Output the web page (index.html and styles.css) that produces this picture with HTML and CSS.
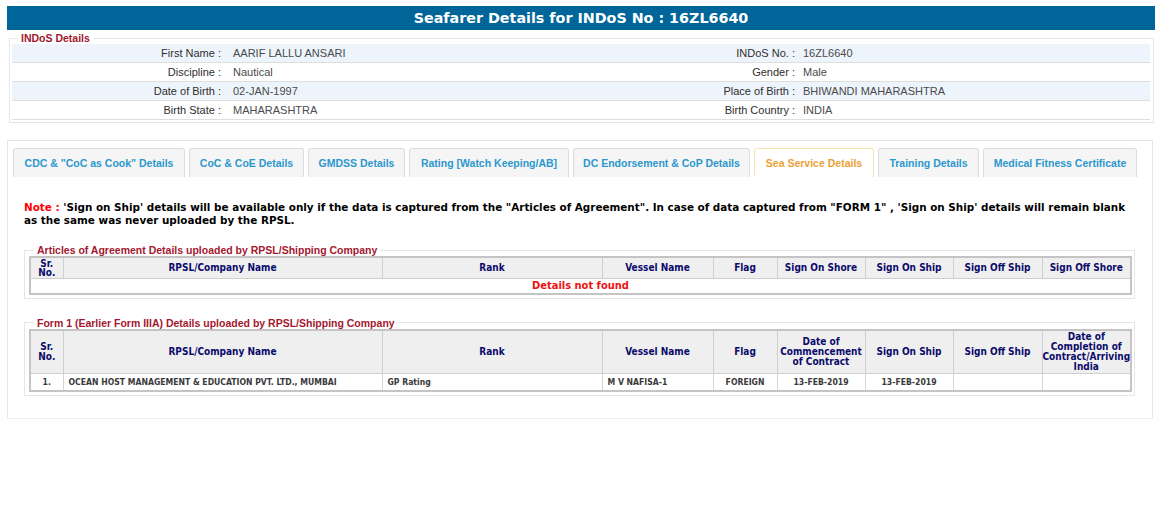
FILE: index.html
```html
<!DOCTYPE html>
<html>
<head>
<meta charset="utf-8">
<title>Seafarer Details</title>
<link rel="stylesheet" href="styles.css">
</head>
<body>
<div class="page">
  <h1 class="title">Seafarer Details for INDoS No : 16ZL6640</h1>

  <fieldset class="box indos">
    <legend>INDoS Details</legend>
    <table class="info">
      <colgroup>
        <col class="ci1"><col class="ci2"><col class="ci3"><col class="ci4">
      </colgroup>
      <tr class="alt">
        <td class="lbl">First Name :</td><td class="val">AARIF LALLU ANSARI</td>
        <td class="lbl r">INDoS No. :</td><td class="val r">16ZL6640</td>
      </tr>
      <tr>
        <td class="lbl">Discipline :</td><td class="val">Nautical</td>
        <td class="lbl r">Gender :</td><td class="val r">Male</td>
      </tr>
      <tr class="alt">
        <td class="lbl">Date of Birth :</td><td class="val">02-JAN-1997</td>
        <td class="lbl r">Place of Birth :</td><td class="val r">BHIWANDI MAHARASHTRA</td>
      </tr>
      <tr>
        <td class="lbl">Birth State :</td><td class="val">MAHARASHTRA</td>
        <td class="lbl r">Birth Country :</td><td class="val r">INDIA</td>
      </tr>
    </table>
  </fieldset>

  <div class="panel">
    <ul class="tabs">
      <li class="tab t1">CDC &amp; "CoC as Cook" Details</li>
      <li class="tab t2">CoC &amp; CoE Details</li>
      <li class="tab t3">GMDSS Details</li>
      <li class="tab t4">Rating [Watch Keeping/AB]</li>
      <li class="tab t5">DC Endorsement &amp; CoP Details</li>
      <li class="tab t6 active">Sea Service Details</li>
      <li class="tab t7">Training Details</li>
      <li class="tab t8">Medical Fitness Certificate</li>
    </ul>

    <div class="tab-body">
      <p class="note"><span class="note-lbl">Note :</span> 'Sign on Ship' details will be available only if the data is captured from the "Articles of Agreement". In case of data captured from "FORM 1" , 'Sign on Ship' details will remain blank as the same was never uploaded by the RPSL.</p>

      <fieldset class="box group g1">
        <legend>Articles of Agreement Details uploaded by RPSL/Shipping Company</legend>
        <table class="grid">
          <colgroup>
            <col class="c-sr"><col class="c-co"><col class="c-rank"><col class="c-ves"><col class="c-flag"><col class="c-d1"><col class="c-d2"><col class="c-d3"><col class="c-d4">
          </colgroup>
          <tr class="head h1">
            <th>Sr.<br>No.</th><th>RPSL/Company Name</th><th>Rank</th><th>Vessel Name</th><th>Flag</th><th>Sign On Shore</th><th>Sign On Ship</th><th>Sign Off Ship</th><th>Sign Off Shore</th>
          </tr>
          <tr class="empty">
            <td colspan="9">Details not found</td>
          </tr>
        </table>
      </fieldset>

      <fieldset class="box group g2">
        <legend>Form 1 (Earlier Form IIIA) Details uploaded by RPSL/Shipping Company</legend>
        <table class="grid">
          <colgroup>
            <col class="c-sr"><col class="c-co"><col class="c-rank"><col class="c-ves"><col class="c-flag"><col class="c-d1"><col class="c-d2"><col class="c-d3"><col class="c-d4">
          </colgroup>
          <tr class="head h2">
            <th>Sr.<br>No.</th><th>RPSL/Company Name</th><th>Rank</th><th>Vessel Name</th><th>Flag</th><th>Date of<br>Commencement<br>of Contract</th><th>Sign On Ship</th><th>Sign Off Ship</th><th>Date of<br>Completion of<br>Contract/Arriving<br>India</th>
          </tr>
          <tr class="data">
            <td class="ctr">1.</td>
            <td>OCEAN HOST MANAGEMENT &amp; EDUCATION PVT. LTD., MUMBAI</td>
            <td>GP Rating</td>
            <td>M V NAFISA-1</td>
            <td class="ctr">FOREIGN</td>
            <td class="ctr">13-FEB-2019</td>
            <td class="ctr">13-FEB-2019</td>
            <td></td>
            <td></td>
          </tr>
        </table>
      </fieldset>
    </div>
  </div>
</div>
</body>
</html>
```

FILE: styles.css
```css
html, body {
  margin: 0;
  padding: 0;
  background: #ffffff;
}

body {
  font-family: "Liberation Sans", Arial, sans-serif;
  font-size: 11px;
  color: #333;
}

.page {
  padding: 6px 5px 0 7px;
}

.title {
  margin: 0;
  height: 24px;
  line-height: 25px;
  background: #006699;
  color: #fff;
  text-align: center;
  font-family: "DejaVu Sans", Verdana, sans-serif;
  font-size: 14.3px;
  font-weight: bold;
}

/* fieldsets */
.box {
  border: 1px solid #e6e6e6;
  margin: 0;
  min-width: 0;
}

.box legend {
  font-family: "Liberation Sans", Arial, sans-serif;
  font-weight: bold;
  font-size: 10.5px;
  color: #a3182f;
  padding: 0 3px;
  line-height: 12px;
}

.indos {
  margin: 2px 1px 0 2px;
  padding: 0 3px 2px 2px;
}

.indos legend {
  margin-left: 6px;
}

.info {
  width: 100%;
  border-collapse: collapse;
  table-layout: fixed;
}

.ci1 { width: 215px; }
.ci2 { width: 357px; }
.ci3 { width: 215px; }

.info td {
  height: 18px;
  border-bottom: 1px solid #dedede;
  padding: 0;
  font-size: 11px;
  line-height: 18px;
  white-space: nowrap;
}

.info tr.alt td {
  background: #eef4fb;
}

.info .lbl {
  text-align: right;
  padding-right: 6px;
  color: #2e2e2e;
}

.info .val {
  padding-left: 6px;
  color: #4a4a4a;
}

.info .lbl.r {
  padding-right: 4px;
}

.info .val.r {
  padding-left: 4px;
}

/* panel with tabs */
.panel {
  margin: 17px 2px 0 0;
  border: 1px solid #e6e6e6;
  border-bottom-color: #f0f0f0;
  padding: 7px 0 22px 5px;
}

.tabs {
  list-style: none;
  margin: 0;
  padding: 0;
  display: flex;
  gap: 4px;
}

.tab {
  box-sizing: border-box;
  flex: 0 0 auto;
  height: 29px;
  line-height: 28px;
  padding: 0;
  background: #f5f5f5;
  border: 1px solid #dddddd;
  border-bottom: none;
  border-radius: 3px 3px 0 0;
  color: #2b98cd;
  font-family: "Liberation Sans", Arial, sans-serif;
  font-weight: bold;
  font-size: 10.5px;
  white-space: nowrap;
  text-align: center;
}

.tab.active {
  background: #fff;
  border-color: #f8e6b3;
  color: #eba135;
}

.t1 { width: 172px; }
.t2 { width: 115px; }
.t3 { width: 97px; }
.t4 { width: 160px; }
.t5 { width: 177px; }
.t6 { width: 120px; }
.t7 { width: 101px; }
.t8 { width: 154px; }

.tab-body {
  padding: 24px 0 0 0;
}

.note {
  margin: 0 14px 17px 11px;
  font-family: "DejaVu Sans", Verdana, sans-serif;
  font-weight: bold;
  font-size: 10.4px;
  line-height: 13px;
  color: #000;
}

.note-lbl {
  color: #ff0000;
}

.group {
  margin: 0 17px 0 11px;
  padding: 0 3px 3px 4px;
}

.group legend {
  margin-left: 5px;
}

.g2 {
  margin-top: 18px;
}

/* grids */
.grid {
  width: 100%;
  table-layout: fixed;
  border-collapse: collapse;
  border: 2px solid #c4c4c4;
  font-family: "DejaVu Sans Condensed", "DejaVu Sans", sans-serif;
  font-stretch: condensed;
}

.c-sr { width: 33px; }
.c-co { width: 319px; }
.c-rank { width: 220px; }
.c-ves { width: 111px; }
.c-flag { width: 64px; }
.c-d1 { width: 88px; }
.c-d2 { width: 88px; }
.c-d3 { width: 89px; }
.c-d4 { width: 89px; }

.grid th {
  background: #efefef;
  color: #0b0b6b;
  font-weight: bold;
  font-size: 10px;
  line-height: 9px;
  border: 1px solid #cfcfcf;
  padding: 0;
  text-align: center;
}

.h1 { height: 21px; }
.h2 { height: 44px; }

.h2 th {
  line-height: 10px;
}

.empty td {
  height: 14px;
  text-align: center;
  color: #ee1111;
  font-weight: bold;
  font-size: 11px;
  line-height: 13px;
  padding: 0;
}

.data td {
  height: 16px;
  border: 1px solid #d4d4d4;
  padding: 0 5px;
  font-size: 8.6px;
  font-weight: bold;
  color: #3a3a3a;
  white-space: nowrap;
  line-height: 14px;
}

.data td.ctr {
  text-align: center;
}
```
